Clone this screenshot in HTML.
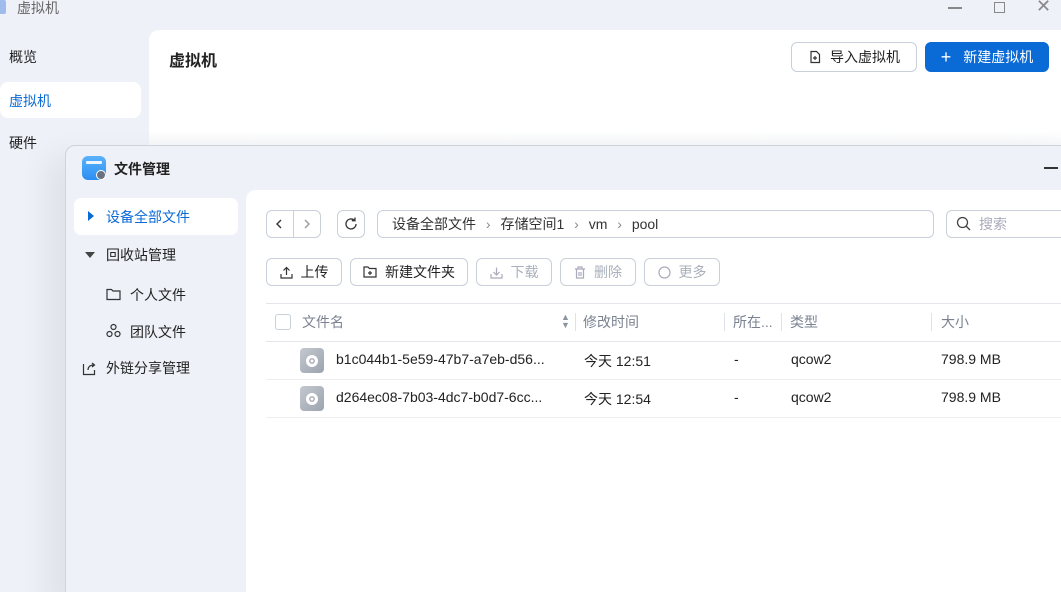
<!DOCTYPE html>
<html><head><meta charset="utf-8"><style>
*{box-sizing:border-box;margin:0;padding:0}
html{width:1061px;height:592px;overflow:hidden}
body{width:1061px;height:592px;overflow:hidden;background:#eef1f8;font-family:"Liberation Sans","Noto Sans CJK SC",sans-serif;position:relative;color:#222}
.abs{position:absolute}
.t{font-size:14px}
.btn{position:absolute;height:30px;border:1px solid #c9d0da;border-radius:6px;background:#fff;font-size:14px;display:flex;align-items:center;justify-content:center;gap:8px;color:#222}
.dis{color:#a9b0bb}
.th{color:#7a8290;font-size:14px}
.sep{position:absolute;width:1px;height:18px;background:#dfe3e8;top:313px}
</style></head><body>
<div class="abs" style="left:-2px;top:0;width:8px;height:14px;background:#7fa5e8;border-radius:2px;opacity:.7"></div>
<div class="abs t" style="left:17px;top:-2px;color:#666">虚拟机</div>
<div class="abs" style="left:948px;top:7px;width:14px;height:1.5px;background:#888"></div>
<div class="abs" style="left:994px;top:2px;width:11px;height:11px;border:1.3px solid #888"></div>
<div class="abs" style="left:1036px;top:-4px;font-size:18px;color:#888">✕</div>
<div class="abs t" style="left:9px;top:47px">概览</div>
<div class="abs" style="left:0;top:82px;width:141px;height:36px;background:#fff;border-radius:8px"></div>
<div class="abs t" style="left:9px;top:91px;color:#0a6ad6">虚拟机</div>
<div class="abs t" style="left:9px;top:133px">硬件</div>
<div class="abs" style="left:149px;top:30px;width:920px;height:570px;background:linear-gradient(#fff 0,#fff 100px,#f6f7f9 115px);border-radius:10px 0 0 0"></div>
<div class="abs" style="left:169px;top:47px;font-size:16px;font-weight:bold">虚拟机</div>
<div class="btn" style="left:791px;top:42px;width:126px;height:30px">
<svg width="14" height="14" viewBox="0 0 14 14" fill="none" stroke="#333" stroke-width="1.2"><path d="M3 1.5h5.5l3 3v8h-8.5z"/><path d="M7 6v4M5 8h4"/></svg>导入虚拟机</div>
<div class="btn" style="left:925px;top:42px;width:124px;height:30px;background:#0a6ad6;border-color:#0a6ad6;color:#fff"><span style="font-size:18px;font-weight:300">+</span>&nbsp;新建虚拟机</div>
<div class="abs" style="left:65px;top:145px;width:1010px;height:460px;background:#eef1f8;border:1px solid #cfd3da;border-radius:10px 0 0 0;box-shadow:-20px 10px 30px rgba(0,0,0,0.06)"></div>
<div class="abs" style="left:82px;top:156px;width:24px;height:24px;border-radius:6px;background:linear-gradient(#5bb2fb,#2b8ff2)"></div>
<div class="abs" style="left:86px;top:161px;width:16px;height:3px;background:#fff;border-radius:1px;opacity:.9"></div>
<div class="abs" style="left:96px;top:170px;width:10px;height:10px;border-radius:50%;background:#6a7280;border:1px solid #fff"></div>
<div class="abs t" style="left:114px;top:159px;font-weight:bold;color:#222">文件管理</div>
<div class="abs" style="left:1044px;top:167px;width:14px;height:2px;background:#333"></div>
<div class="abs" style="left:74px;top:198px;width:164px;height:37px;background:#fff;border-radius:7px"></div>
<div class="abs" style="left:88px;top:211px;width:0;height:0;border-left:6px solid #0a6ad6;border-top:5px solid transparent;border-bottom:5px solid transparent"></div>
<div class="abs t" style="left:106px;top:207px;color:#0a6ad6">设备全部文件</div>
<div class="abs" style="left:85px;top:252px;width:0;height:0;border-top:6px solid #444;border-left:5px solid transparent;border-right:5px solid transparent"></div>
<div class="abs t" style="left:106px;top:245px">回收站管理</div>
<svg class="abs" style="left:106px;top:288px" width="15" height="13" viewBox="0 0 15 13" fill="none" stroke="#333" stroke-width="1.2"><path d="M1 1.5h4.5l1.5 1.5h7v8.5h-13z"/></svg>
<div class="abs t" style="left:130px;top:285px">个人文件</div>
<svg class="abs" style="left:106px;top:323px" width="15" height="15" viewBox="0 0 15 15" fill="none" stroke="#333" stroke-width="1.2"><circle cx="7.5" cy="4" r="2.5"/><circle cx="3.5" cy="11" r="2.5"/><circle cx="11.5" cy="11" r="2.5"/></svg>
<div class="abs t" style="left:130px;top:322px">团队文件</div>
<svg class="abs" style="left:82px;top:361px" width="15" height="15" viewBox="0 0 15 15" fill="none" stroke="#333" stroke-width="1.2"><path d="M1.5 3v10.5h11V9"/><path d="M6 9c0-3 2-5 6-5M10 2l2.5 2-2.5 2"/></svg>
<div class="abs t" style="left:106px;top:358px">外链分享管理</div>
<div class="abs" style="left:246px;top:190px;width:830px;height:410px;background:#fff;border-radius:10px 0 0 0"></div>
<div class="abs" style="left:266px;top:210px;width:55px;height:28px;border:1px solid #c9d0da;border-radius:6px"></div>
<div class="abs" style="left:293px;top:211px;width:1px;height:26px;background:#c9d0da"></div>
<svg class="abs" style="left:275px;top:219px" width="8" height="10" viewBox="0 0 8 10" fill="none" stroke="#333" stroke-width="1.4"><path d="M6 1L2 5l4 4"/></svg>
<svg class="abs" style="left:303px;top:219px" width="8" height="10" viewBox="0 0 8 10" fill="none" stroke="#999" stroke-width="1.4"><path d="M2 1l4 4-4 4"/></svg>
<div class="abs" style="left:337px;top:210px;width:28px;height:28px;border:1px solid #c9d0da;border-radius:6px"></div>
<svg class="abs" style="left:343px;top:216px" width="16" height="16" viewBox="0 0 16 16" fill="none" stroke="#333" stroke-width="1.3"><path d="M13 8a5 5 0 1 1-1.5-3.6"/><path d="M12 1.5v3.2H8.8"/></svg>
<div class="abs" style="left:377px;top:210px;width:557px;height:28px;border:1px solid #c9d0da;border-radius:6px"></div>
<div class="abs t" style="left:392px;top:214px;color:#333">设备全部文件 <span style="color:#888;margin:0 6px">›</span> 存储空间1 <span style="color:#888;margin:0 6px">›</span> vm <span style="color:#888;margin:0 6px">›</span> pool</div>
<div class="abs" style="left:946px;top:210px;width:130px;height:28px;border:1px solid #c9d0da;border-radius:6px"></div>
<svg class="abs" style="left:956px;top:216px" width="15" height="15" viewBox="0 0 15 15" fill="none" stroke="#444" stroke-width="1.3"><circle cx="6.5" cy="6.5" r="5"/><path d="M10 10l4 4"/></svg>
<div class="abs t" style="left:979px;top:214px;color:#aab">搜索</div>
<div class="btn" style="left:266px;top:258px;width:76px;height:28px"><svg width="13" height="13" viewBox="0 0 13 13" fill="none" stroke="#333" stroke-width="1.2"><path d="M1 8v4h11V8M6.5 9V1.5M3.5 4.5l3-3 3 3"/></svg>上传</div>
<div class="btn" style="left:350px;top:258px;width:118px;height:28px"><svg width="14" height="12" viewBox="0 0 14 12" fill="none" stroke="#333" stroke-width="1.2"><path d="M1 1h4l1.5 1.5h6.5v8.5H1z M7 5v4M5 7h4"/></svg>新建文件夹</div>
<div class="btn dis" style="left:476px;top:258px;width:76px;height:28px"><svg width="13" height="13" viewBox="0 0 13 13" fill="none" stroke="#aab" stroke-width="1.2"><path d="M1 8v4h11V8M6.5 1.5V9M3.5 6l3 3 3-3"/></svg>下载</div>
<div class="btn dis" style="left:560px;top:258px;width:76px;height:28px"><svg width="12" height="13" viewBox="0 0 12 13" fill="none" stroke="#aab" stroke-width="1.2"><path d="M1 3h10M4 3V1h4v2M2.5 3v9h7V3M5 6v4M7 6v4"/></svg>删除</div>
<div class="btn dis" style="left:644px;top:258px;width:76px;height:28px"><svg width="13" height="13" viewBox="0 0 13 13" fill="none" stroke="#aab" stroke-width="1.2"><circle cx="6.5" cy="6.5" r="5.5"/></svg>更多</div>
<div class="abs" style="left:266px;top:303px;width:800px;height:1px;background:#e3e6ea"></div>
<div class="abs" style="left:275px;top:314px;width:16px;height:16px;border:1px solid #c9d0da;border-radius:3px"></div>
<div class="abs th" style="left:302px;top:312px">文件名</div>
<div class="abs" style="left:561px;top:313px;font-size:9px;line-height:8px;color:#8a93a0">▲<br>▼</div>
<div class="sep" style="left:575px"></div>
<div class="abs th" style="left:583px;top:312px">修改时间</div>
<div class="sep" style="left:724px"></div>
<div class="abs th" style="left:733px;top:312px">所在...</div>
<div class="sep" style="left:781px"></div>
<div class="abs th" style="left:790px;top:312px">类型</div>
<div class="sep" style="left:931px"></div>
<div class="abs th" style="left:941px;top:312px">大小</div>
<div class="abs" style="left:266px;top:341px;width:800px;height:1px;background:#e3e6ea"></div>
<div class="abs" style="left:266px;top:379px;width:800px;height:1px;background:#eceef1"></div>
<div class="abs" style="left:266px;top:417px;width:800px;height:1px;background:#eceef1"></div>
<div class="abs" style="left:300px;top:348px;width:24px;height:25px;border-radius:4px;background:linear-gradient(135deg,#c3c8d0,#9da4ae)"></div>
<div class="abs" style="left:306px;top:355px;width:12px;height:12px;border-radius:50%;background:#fff;border:3px solid #fff;box-shadow:inset 0 0 0 1.5px #aab"></div>
<div class="abs" style="left:300px;top:386px;width:24px;height:25px;border-radius:4px;background:linear-gradient(135deg,#c3c8d0,#9da4ae)"></div>
<div class="abs" style="left:306px;top:393px;width:12px;height:12px;border-radius:50%;background:#fff;border:3px solid #fff;box-shadow:inset 0 0 0 1.5px #aab"></div>
<div class="abs t" style="left:336px;top:351px">b1c044b1-5e59-47b7-a7eb-d56...</div>
<div class="abs t" style="left:584px;top:351px">今天 12:51</div>
<div class="abs t" style="left:734px;top:351px">-</div>
<div class="abs t" style="left:791px;top:351px">qcow2</div>
<div class="abs t" style="left:941px;top:351px">798.9 MB</div>
<div class="abs t" style="left:336px;top:389px">d264ec08-7b03-4dc7-b0d7-6cc...</div>
<div class="abs t" style="left:584px;top:389px">今天 12:54</div>
<div class="abs t" style="left:734px;top:389px">-</div>
<div class="abs t" style="left:791px;top:389px">qcow2</div>
<div class="abs t" style="left:941px;top:389px">798.9 MB</div>
</body></html>
